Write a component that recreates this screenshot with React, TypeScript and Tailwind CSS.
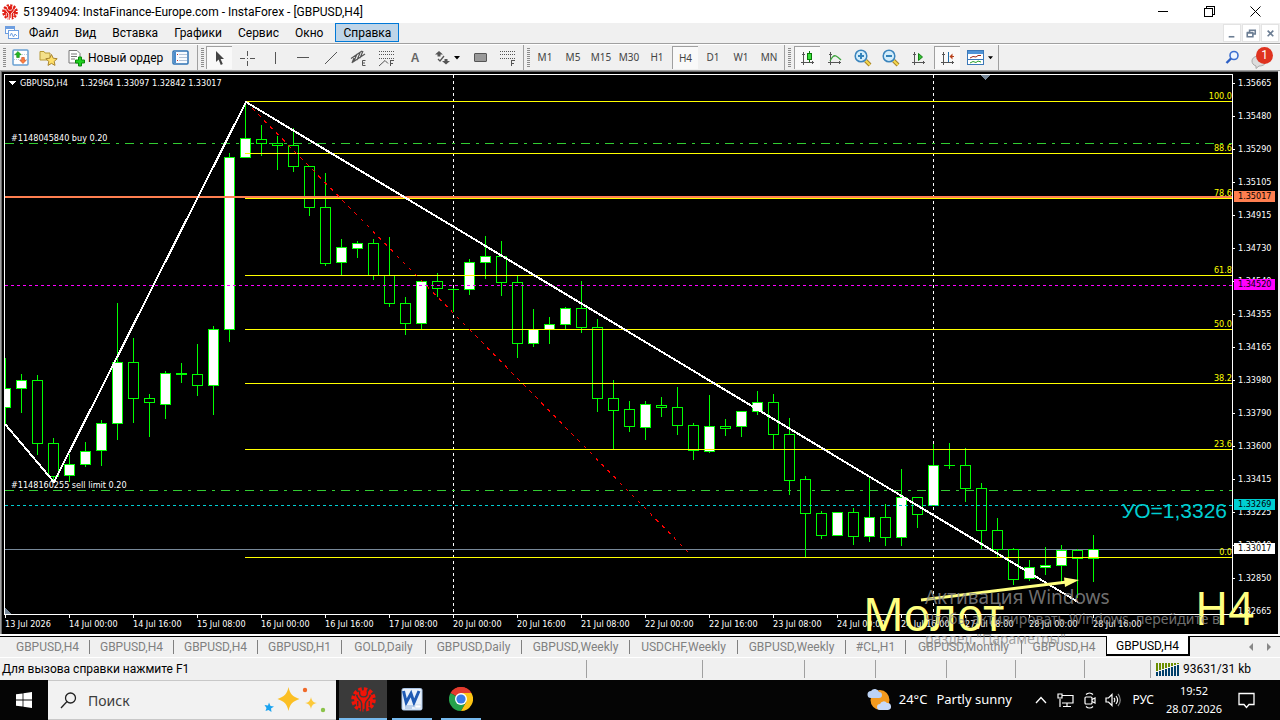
import type { ReactNode } from "react";
import clsx from "clsx";

const menu = ["Файл", "Вид", "Вставка", "Графики", "Сервис", "Окно", "Справка"];

const timeframes = ["M1", "M5", "M15", "M30", "H1", "H4", "D1", "W1", "MN"];

const prices = [
  "1.35665", "1.35480", "1.35290", "1.35105", "1.34915", "1.34730", "1.34540", "1.34355", "1.34165",
  "1.33980", "1.33790", "1.33600", "1.33415", "1.33225", "1.33040", "1.32850", "1.32665",
];

const times = [
  "13 Jul 2026", "14 Jul 00:00", "14 Jul 16:00", "15 Jul 08:00", "16 Jul 00:00", "16 Jul 16:00",
  "17 Jul 08:00", "20 Jul 00:00", "20 Jul 16:00", "21 Jul 08:00", "22 Jul 00:00", "22 Jul 16:00",
  "23 Jul 08:00", "24 Jul 00:00", "24 Jul 16:00", "27 Jul 08:00", "28 Jul 00:00", "28 Jul 16:00",
];

const badges = [
  { price: "1.35017", className: "top-[117px] bg-[#ff7f50]" },
  { price: "1.34520", className: "top-[205px] bg-[#ff00ff]" },
  { price: "1.33269", className: "top-[425px] bg-[#00ced1]" },
  { price: "1.33017", className: "top-[469px] bg-white" },
];

const fibo = [
  { y: 101, label: "100.0" },
  { y: 153, label: "88.6" },
  { y: 198, label: "78.6" },
  { y: 275, label: "61.8" },
  { y: 329, label: "50.0" },
  { y: 383, label: "38.2" },
  { y: 449, label: "23.6" },
  { y: 557, label: "0.0" },
];

// high, body top, body bottom, low, bullish
const candles: [number, number, number, number, number][] = [
  [358, 388, 407, 423, 1], [374, 380, 388, 412, 1], [375, 380, 443, 454, 0], [438, 443, 476, 482, 0],
  [454, 464, 475, 481, 1], [442, 451, 464, 466, 1], [420, 423, 450, 465, 1], [303, 362, 423, 439, 1],
  [338, 362, 398, 422, 0], [394, 398, 402, 436, 0], [371, 373, 404, 418, 1], [363, 373, 374, 382, 0],
  [344, 374, 385, 395, 0], [326, 329, 385, 414, 1], [153, 157, 329, 341, 1], [102, 138, 157, 157, 1],
  [125, 139, 143, 155, 0], [136, 143, 145, 169, 0], [128, 145, 166, 171, 0], [166, 166, 207, 215, 0],
  [173, 207, 263, 265, 0], [239, 247, 262, 274, 1], [241, 243, 248, 257, 1], [239, 243, 275, 279, 0],
  [237, 275, 303, 306, 0], [297, 303, 323, 334, 0], [281, 281, 323, 329, 1], [273, 281, 288, 296, 0],
  [288, 289, 289, 311, 0], [259, 262, 289, 294, 1], [236, 256, 262, 278, 1], [241, 256, 282, 295, 0],
  [275, 282, 343, 357, 0], [309, 329, 343, 346, 1], [317, 324, 329, 343, 1], [307, 308, 324, 328, 1],
  [281, 308, 327, 332, 0], [319, 327, 398, 411, 0], [380, 398, 410, 449, 0], [401, 409, 426, 431, 0],
  [401, 404, 427, 439, 1], [397, 405, 407, 416, 0], [387, 407, 425, 434, 0], [423, 425, 450, 459, 0],
  [395, 426, 451, 452, 1], [419, 426, 428, 435, 0], [411, 411, 426, 436, 1], [391, 402, 411, 414, 1],
  [394, 402, 434, 448, 0], [418, 434, 480, 494, 0], [476, 479, 513, 557, 0], [511, 513, 535, 538, 0],
  [512, 512, 535, 535, 1], [508, 512, 536, 544, 0], [477, 517, 536, 541, 1], [504, 517, 537, 545, 0],
  [469, 497, 537, 545, 1], [497, 497, 514, 527, 0], [444, 465, 505, 505, 1], [443, 465, 465, 468, 0],
  [448, 465, 488, 501, 0], [483, 488, 530, 548, 0], [518, 530, 549, 557, 0], [548, 549, 579, 584, 0],
  [560, 567, 578, 580, 1], [547, 565, 567, 574, 1], [545, 550, 565, 581, 1], [549, 550, 558, 597, 0],
  [535, 549, 558, 581, 1],
];

const tabs = [
  { label: "GBPUSD,H4", width: "w-[84px]" },
  { label: "GBPUSD,H4", width: "w-[84px]" },
  { label: "GBPUSD,H4", width: "w-[84px]" },
  { label: "GBPUSD,H1", width: "w-[84px]" },
  { label: "GOLD,Daily", width: "w-[84px]" },
  { label: "GBPUSD,Daily", width: "w-[96px]" },
  { label: "GBPUSD,Weekly", width: "w-[108px]" },
  { label: "USDCHF,Weekly", width: "w-[108px]" },
  { label: "GBPUSD,Weekly", width: "w-[108px]" },
  { label: "#CL,H1", width: "w-[60px]" },
  { label: "GBPUSD,Monthly", width: "w-[116px]" },
  { label: "GBPUSD,H4", width: "w-[84px]" },
];

const statusCells = ["w-[116px]", "w-[102px]", "w-[71px]", "w-[71px]", "w-[69px]", "w-[69px]", "w-[66px]"];

/* ---------- icons ---------- */

function GearLogo({ size, gap, color }: { size: number; gap: string; color: string }) {
  return (
    <svg width={size} height={size} viewBox="0 0 24 24" fill="none" className="shrink-0">
      <circle cx="12" cy="12" r="10" stroke={color} strokeWidth="3.600" strokeDasharray="3.250 1.986" />
      <circle cx="12" cy="12" r="9" fill={color} />
      <path d="M5.500 7.500C5.500 12 10.200 12 10.200 16V24M18.500 7.500C18.500 12 13.800 12 13.800 16V24" stroke={gap} strokeWidth="1.500" />
      <path d="M8.500 3.500c-1 4 .5 6 3.500 6s4.500-2 3.500-6" stroke={gap} strokeWidth="1.300" />
      <circle cx="12" cy="6.300" r="1.800" fill={color} />
      <path d="M6.500 13.500v5M17.500 13.500v5" stroke={gap} strokeWidth="1.200" />
    </svg>
  );
}

function Axes({ children }: { children: ReactNode }) {
  return (
    <svg width="16" height="16" viewBox="0 0 16 16" fill="none" shapeRendering="crispEdges">
      <path d="M3.500 2v13M1 12.500h13" stroke="#555" />
      <path d="M2 4h3v1H2zM12 11h1v3h-1z" fill="#555" />
      {children}
    </svg>
  );
}

function Magnifier({ plus }: { plus?: boolean }) {
  return (
    <svg width="18" height="18" viewBox="0 0 18 18" fill="none">
      <path d="M11.500 11.500l4.500 4.500" stroke="#a8842a" strokeWidth="4" />
      <path d="M11.500 11.500l4.500 4.500" stroke="#f5d84e" strokeWidth="2" />
      <circle cx="7" cy="7" r="5.800" fill="#d3edfb" stroke="#3b85bd" strokeWidth="1.500" />
      <path d={plus ? "M4 7h6M7 4v6" : "M4 7h6"} stroke="#3483ba" strokeWidth="2" />
    </svg>
  );
}

function Caret() {
  return (
    <svg width="6" height="4" viewBox="0 0 6 4">
      <path d="M0 0h6L3 3.500z" fill="#000" />
    </svg>
  );
}

function DottedLines({ children }: { children?: ReactNode }) {
  return (
    <svg width="16" height="18" viewBox="0 0 16 18" fill="none">
      <path d="M0 2.500h15M0 5.500h15M0 9.500h15" stroke="#555" strokeDasharray="1 1" shapeRendering="crispEdges" />
      {children}
      <path d="M11.500 17v-5.500H15M11.500 14.500H14" stroke="#555" shapeRendering="crispEdges" />
    </svg>
  );
}

/* ---------- toolbar pieces ---------- */

function Grip() {
  return (
    <span className="ml-[3px] flex h-5 w-[3px] flex-col justify-between">
      {[0, 1, 2, 3, 4, 5, 6, 7, 8, 9].map((i) => (
        <i key={i} className="h-px bg-[#8c8c8c]" />
      ))}
    </span>
  );
}

function Tool({ label, pressed, wide, children }: { label: string; pressed?: boolean; wide?: boolean; children: ReactNode }) {
  return (
    <button aria-label={label} className={clsx("flex h-6 shrink-0 items-center justify-center", wide ? "w-[37px]" : "w-7")}>
      <span
        className={clsx(
          "flex h-[23px] w-[26px] items-center justify-center gap-1",
          pressed && "border-t border-l border-[#a0a0a0] bg-[#f9f9f9]"
        )}
      >
        {children}
      </span>
    </button>
  );
}

function Toolbar() {
  return (
    <div className="flex h-[26px] items-center border-t border-white bg-[#f0f0f0]">
      <div className="flex h-full w-[198px] items-center border-r border-[#a0a0a0]">
        <Grip />
        <Tool label="Новый график">
          <svg width="17" height="17" viewBox="0 0 17 17">
            <rect x="1" y="1" width="15" height="15" rx="1" fill="#fff" stroke="#68a0d2" strokeWidth="1.500" />
            <path d="M2 5.500h13M2 10.500h13" stroke="#bcd" strokeDasharray="1 1" />
            <path d="M6 2.500l3.200 3.200H7.300V8.500H4.700V5.700H2.800z" fill="#22b822" stroke="#118811" strokeWidth=".6" />
            <path d="M11 14.500l-3.200-3.200h1.900V8.500h2.600v2.800h1.900z" fill="#ff8040" stroke="#c84414" strokeWidth=".6" />
          </svg>
        </Tool>
        <Tool label="Профили">
          <svg width="19" height="18" viewBox="0 0 19 18">
            <path d="M1 2.500h4l1 1.500h5v7H1z" fill="#f4e08a" stroke="#b79a38" />
            <path d="M12.500 5.500l1.700 3.700 4 .5-3 2.700.8 4-3.500-2-3.500 2 .8-4-3-2.700 4-.5z" fill="#ffe06a" stroke="#a88430" />
          </svg>
        </Tool>
        <button className="flex items-center gap-[3px] pl-[5px] text-[12px] whitespace-nowrap">
          <svg width="18" height="18" viewBox="0 0 18 18">
            <path d="M2 1.500h8l3 3V14H2z" fill="#fff" stroke="#777" />
            <path d="M4 5h6M4 7.500h6M4 10h4" stroke="#777" />
            <path d="M9 9.500h3v-3h3v3h3v3h-3v3h-3v-3H9z" transform="translate(-.5 1.500)" fill="#20d020" stroke="#0a8a0a" />
          </svg>
          Новый ордер
        </button>
        <span className="flex flex-1 justify-center">
          <svg width="17" height="16" viewBox="0 0 17 16">
            <rect x="1" y="1" width="15" height="13" rx="1" fill="#f8fbff" stroke="#2f73b4" strokeWidth="1.500" />
            <path d="M2 2h2v11H2z" fill="#4a8ccc" />
            <path d="M7 4.500h8M7 7.500h8M7 10.500h8" stroke="#b4c4d8" />
            <path d="M5 4h1v1H5zM5 10h1v1H5z" fill="#d03020" />
          </svg>
        </span>
      </div>

      <div className="flex h-full w-[326px] items-center border-r border-[#a0a0a0]">
        <Grip />
        <span className="w-px" />
        <Tool label="Курсор" pressed>
          <svg width="10" height="16" viewBox="0 0 10 16">
            <path d="M1 1v11l2.600-2.400L5.800 15l2-1L5.600 9H9z" fill="#444" />
          </svg>
        </Tool>
        <Tool label="Перекрестие">
          <svg width="16" height="16" viewBox="0 0 16 16" shapeRendering="crispEdges">
            <path d="M8.500 1v5M8.500 11v5M1 8.500h5M11 8.500h5" stroke="#555" />
            <path d="M8 8h1v1H8z" fill="#555" />
          </svg>
        </Tool>
        <Tool label="Вертикальная линия">
          <span className="h-3 w-px bg-[#555]" />
        </Tool>
        <Tool label="Горизонтальная линия">
          <span className="h-px w-3 bg-[#555]" />
        </Tool>
        <Tool label="Трендовая линия">
          <svg width="14" height="14" viewBox="0 0 14 14">
            <path d="M1 13L13 1" stroke="#555" />
          </svg>
        </Tool>
        <Tool label="Канал">
          <svg width="18" height="18" viewBox="0 0 18 18" fill="none">
            <path d="M1 9.500L12 2M3 13L15 5M4 12l3-7M7 11l3-7M10 9l3-7M2 14l2-5" stroke="#555" strokeWidth="1.200" />
            <path d="M15.500 11.500H12.500v5h3M12.500 14h2.500" stroke="#555" />
          </svg>
        </Tool>
        <Tool label="Фибоначчи">
          <DottedLines>
            <path d="M0 17l6-5.500 3 3" stroke="#555" />
          </DottedLines>
        </Tool>
        <Tool label="Текст">
          <span className="font-['Liberation_Sans'] text-[12px] font-bold text-[#666]">A</span>
        </Tool>
        <Tool label="Стрелки" wide>
          <svg width="15" height="14" viewBox="0 0 15 14" fill="none">
            <path d="M4 0l4 3.500H5.500v2h-3v-2H0zM11 13.500L7 10h2.500V8h3v2H15z" fill="#555" />
            <path d="M3 8l2 2 4-5" stroke="#555" strokeWidth="1.300" />
          </svg>
          <Caret />
        </Tool>
        <Tool label="Прямоугольник">
          <span className="h-[9px] w-[13px] rounded-[1px] border border-[#555] bg-[#999]" />
        </Tool>
        <Tool label="Уровни">
          <DottedLines />
        </Tool>
      </div>

      <div className="flex h-full w-[261px] items-center border-r border-[#a0a0a0]">
        <Grip />
        <span className="w-px" />
        {timeframes.map((tf) => (
          <Tool key={tf} label={tf} pressed={tf === "H4"}>
            <span className="font-['Noto_Sans'] text-[10px] text-[#444]">{tf}</span>
          </Tool>
        ))}
      </div>

      <div className="flex h-full w-[214px] items-center border-r border-[#a0a0a0]">
        <Grip />
        <span className="w-[2px]" />
        <Tool label="Свечи" pressed>
          <Axes>
            <path d="M9.500 1v11" stroke="#0a7a0a" />
            <path d="M7.500 3.500h4v6h-4z" fill="#3be03b" stroke="#0a7a0a" />
          </Axes>
        </Tool>
        <Tool label="Линия">
          <Axes>
            <path d="M3 11c2-4 4-6 6-5s3 2 5 4" stroke="#3ea53e" strokeWidth="1.300" shapeRendering="auto" />
          </Axes>
        </Tool>
        <Tool label="Увеличить">
          <Magnifier plus />
        </Tool>
        <Tool label="Уменьшить">
          <Magnifier />
        </Tool>
        <Tool label="Автопрокрутка">
          <Axes>
            <path d="M7.500 3.500v7l4-3.500z" fill="#35c035" stroke="#128212" shapeRendering="auto" />
          </Axes>
        </Tool>
        <Tool label="Сдвиг графика" pressed>
          <Axes>
            <path d="M8.500 2v10" stroke="#1f6ca8" />
            <path d="M10 6.500h4" stroke="#b8401a" />
            <path d="M9.500 6.500l3-3v6z" fill="#b8401a" shapeRendering="auto" />
          </Axes>
        </Tool>
        <Tool label="Шаблоны" wide>
          <svg width="17" height="15" viewBox="0 0 17 15" className="shrink-0" fill="none">
            <rect x=".5" y=".5" width="16" height="14" fill="#fff" stroke="#3b78b8" />
            <path d="M1 1h15v3H1z" fill="#4f93d6" />
            <path d="M1 9.500h15" stroke="#3b78b8" />
            <path d="M3 8l3-1.500 3 .5 2-1.500h3" stroke="#a02818" />
            <path d="M3 13l3-1.500 3 1 2-1.500 3 1" stroke="#28a028" />
          </svg>
          <Caret />
        </Tool>
      </div>

      <div className="flex flex-1 items-center justify-end gap-[11px] pr-[7px]">
        <button aria-label="Поиск">
          <svg width="15" height="15" viewBox="0 0 15 15" fill="none">
            <circle cx="9" cy="5.500" r="4" fill="#eef5ff" stroke="#3c6fd0" strokeWidth="1.600" />
            <path d="M6 8.500L1.500 13" stroke="#2c5fc4" strokeWidth="2.400" />
          </svg>
        </button>
        <button className="relative h-6 w-[22px]" aria-label="Уведомления">
          <svg width="16" height="14" viewBox="0 0 16 14" className="mt-2">
            <path d="M8 1c4 0 7 2 7 5s-3 5-7 5l-3 2.500V11C2 10 1 8 1 6c0-3 3-5 7-5z" fill="#dcdcdc" stroke="#a8a8a8" />
          </svg>
          <span className="absolute top-px right-0 flex size-[17px] items-center justify-center rounded-full bg-[#df3320] text-[12px] leading-4 text-white">
            1
          </span>
        </button>
      </div>
    </div>
  );
}

/* ---------- chart ---------- */

function Plot() {
  return (
    <div className="border border-white">
      <svg className="block h-[539px] w-full text-[9px]" fill="none">
        <g transform="translate(-5 -75)" shapeRendering="crispEdges">
          <path d="M453.500 75V614M933.500 75V614" stroke="#fff" strokeDasharray="3 3" />
          <path d="M5 143.500H3000M5 490.500H3000" stroke="#32cd32" strokeDasharray="9 6 3 6" />
          <path d="M5 549.500H3000" stroke="#778899" />
          {candles.map(([high, top, bottom, low, up], i) => {
            const x = 5 + i * 16;
            return (
              <g key={i} stroke="#00ff00">
                <path d={`M${x + 0.5} ${high}V${top}M${x + 0.5} ${bottom}V${low + 1}`} />
                {top === bottom ? (
                  <path d={`M${x - 5} ${top + 0.5}h11`} />
                ) : (
                  <rect x={x - 4.5} y={top + 0.5} width="10" height={bottom - top} fill={up ? "#fff" : "#000"} />
                )}
              </g>
            );
          })}
          {fibo.map(({ y }) => (
            <path key={y} d={`M245 ${y + 0.5}H3000`} stroke="#ffff00" />
          ))}
          <path d="M5 285.500H3000" stroke="#ff00ff" strokeDasharray="3 3" />
          <path d="M5 505.500H3000" stroke="#00ced1" strokeDasharray="3 3" />
          <path d="M5 197H3000" stroke="#ff7f50" strokeWidth="2" />
          <path d="M246 102L691 555" stroke="#ff0000" strokeDasharray="3.600 5" />
          <path d="M5 424L54 482L246 102L1078 602" stroke="#fff" strokeWidth="2" />
          <path d="M980 75h11l-5.500 5z" fill="#778899" />
          <path d="M5 608v6h6z" fill="#778899" />
          <path d="M8 81h8l-4 4z" fill="#fff" />
        </g>
        <g fill="#fff">
          <text x="15" y="11">GBPUSD,H4</text>
          <text x="75" y="11">1.32964 1.33097 1.32842 1.33017</text>
          <text x="6" y="66">#1148045840 buy 0.20</text>
          <text x="6" y="413">#1148160255 sell limit 0.20</text>
        </g>
        {fibo.map(({ y, label }) => (
          <text key={y} x="100%" y={y - 77} textAnchor="end" fill="#ffff00">
            {label}
          </text>
        ))}
      </svg>
    </div>
  );
}

function PriceAxis() {
  return (
    <div className="relative w-[45px] shrink-0 pt-1 text-[9px] leading-[10px]">
      <div>
        {prices.map((p) => (
          <div key={p} className="flex h-[33px] items-start gap-[3px] last:h-4">
            <i className="mt-[5px] h-px w-[2px] bg-white" />
            {p}
          </div>
        ))}
      </div>
      {badges.map(({ price, className }) => (
        <span key={price} className={clsx("absolute left-px h-[11px] w-[41px] pl-1 text-black", className)}>
          {price}
        </span>
      ))}
    </div>
  );
}

function Chart() {
  return (
    <main className="relative flex flex-1 border-t border-l border-[#a0a0a0] bg-[#f0f0f0] pr-[2px]">
      <div className="flex min-w-0 flex-1 border-t border-l border-[#696969] bg-black pt-[2px] pl-[2px] font-['DejaVu_Sans_Condensed','Noto_Sans',sans-serif] text-white">
        <div className="min-w-0 flex-1">
          <Plot />
          <div className="flex h-[19px] overflow-hidden pl-px text-[9px] leading-3">
            {times.map((t) => (
              <div key={t} className="w-16 shrink-0 whitespace-nowrap">
                <i className="block h-[3px] w-px bg-white" />
                {t}
              </div>
            ))}
          </div>
        </div>
        <PriceAxis />
      </div>

      {/* objects drawn by hand over the chart */}
      <div className="pointer-events-none absolute inset-0 font-['Noto_Sans',sans-serif] whitespace-nowrap text-[#ffff80]">
        <svg className="absolute top-[500px] left-[918px]" width="164" height="34" viewBox="0 0 164 34">
          <path d="M2 29L148 11" stroke="#ffff80" strokeWidth="3" />
          <path d="M145 6.500L160 9l-14 7z" fill="#ffff80" />
        </svg>
        <span className="absolute top-[517px] left-[862px] text-[45px] leading-[52px]">Молот</span>
        <span className="absolute top-[511px] right-[26px] text-[45px] leading-[52px]">H4</span>
        <span className="absolute top-[428px] right-[53px] font-['Liberation_Sans',sans-serif] text-[21px] leading-6 text-[#00ced1]">
          УО=1,3326
        </span>
      </div>

      {/* system activation notice */}
      <div className="pointer-events-none absolute top-[514px] left-[924px] z-10 font-['Noto_Sans',sans-serif] whitespace-nowrap text-[#8c8c8c]/80">
        <p className="text-[19px] leading-6">Активация Windows</p>
        <p className="text-[14px] leading-5">Чтобы активировать Windows, перейдите в</p>
        <p className="text-[14px] leading-5">раздел "Параметры".</p>
      </div>
    </main>
  );
}

/* ---------- taskbar ---------- */

function Taskbar() {
  return (
    <footer className="flex h-10 bg-[#050505] font-['Noto_Sans',sans-serif] text-[13px] text-white">
      <button className="flex w-12 items-center justify-center" aria-label="Пуск">
        <svg width="16" height="16" viewBox="0 0 16 16" fill="#fff">
          <path d="M0 2.300L6.600 1.400v6.200H0zM7.400 1.300L16 0v7.600H7.400zM0 8.400h6.600v6.200L0 13.700zM7.400 8.400H16V16l-8.600-1.300z" />
        </svg>
      </button>
      <label className="flex w-72 items-center border-y border-[#c8c8c8] bg-[#f2f2f2] pr-[10px] pl-3">
        <svg width="17" height="17" viewBox="0 0 17 17" fill="none" stroke="#222" strokeWidth="1.300">
          <circle cx="10.500" cy="6" r="5" />
          <path d="M7 9.500L1 16" />
        </svg>
        <input type="text" aria-label="Поиск" placeholder="Поиск" className="ml-[11px] w-0 flex-1 text-[14px] outline-none placeholder:text-[#3c3c3c]" />
        <svg width="62" height="28" viewBox="0 0 62 28">
          <path d="M24.500 1c1.500 7 4 9.500 11 12-7 2.500-9.500 5-11 12-1.500-7-4-9.500-11-12 7-2.500 9.500-5 11-12z" fill="#fbbf24" />
          <path d="M47 11c.8 4 2.200 5.500 6 6-3.800.8-5.200 2.200-6 6-.8-3.800-2.200-5.200-6-6 3.800-.5 5.200-2 6-6z" fill="#fcc93a" />
          <path d="M5 16.500l1.500 3.500 3.500.5-3 2 .5 3.500-3-2-3 1 1-3-2-3 3.500.5z" fill="#1aa3f0" />
          <circle cx="41" cy="4" r="2.200" fill="#f06a2a" />
          <circle cx="59" cy="24" r="2.200" fill="#8bc34a" />
        </svg>
      </label>
      <button className="ml-[3px] flex w-12 items-center justify-center border-b-2 border-[#76b9ed] bg-[#3a3a3a]" aria-label="InstaForex">
        <GearLogo size={25} gap="#3a3a3a" color="#f01408" />
      </button>
      <button className="ml-[5px] flex w-10 items-center justify-center border-b-2 border-[#76b9ed]" aria-label="Word">
        <svg width="22" height="23" viewBox="0 0 22 23">
          <rect x="1" y=".5" width="20" height="21.500" rx="1.500" fill="#e9f1fb" stroke="#a9c4e6" />
          <path d="M2.500 3l2.700 11.500L10 5.500 13 14.500 18 3" fill="none" stroke="#1f5ab4" strokeWidth="3" />
          <path d="M4 18h10M4 20h7" stroke="#8fb0dc" />
          <path d="M14 17h6v3h-6z" fill="#fff" stroke="#b9cce6" strokeWidth=".6" />
        </svg>
      </button>
      <button className="ml-[9px] flex w-10 items-center justify-center border-b-2 border-[#76b9ed]" aria-label="Chrome">
        <svg width="24" height="24" viewBox="0 0 24 24">
          <path d="M12 12L1.600 6A12 12 0 0 1 22.400 6z" fill="#e33b2e" />
          <path d="M12 12L1.600 6A12 12 0 0 0 12 24l5.200-9z" fill="#26a14b" />
          <path d="M12 6h10.400A12 12 0 0 1 12 24l5.200-9z" fill="#fdc414" />
          <path d="M1.600 6A12 12 0 0 1 22.400 6H12L8 8z" fill="#e33b2e" />
          <circle cx="12" cy="12" r="6" fill="#fff" />
          <circle cx="12" cy="12" r="4.600" fill="#3a7be8" />
        </svg>
      </button>

      <div className="flex flex-1 items-center justify-end">
        <svg width="25" height="24" viewBox="0 0 25 24">
          <ellipse cx="13" cy="12" rx="9.500" ry="10" fill="#f39a1e" />
          <path d="M4 10a3.500 3.500 0 0 1 0-7 4.500 4.500 0 0 1 8 1 3 3 0 0 1 0 6z" fill="#bcd3f5" />
          <path d="M13 22a3 3 0 0 1 0-6 4 4 0 0 1 7-1 3.500 3.500 0 0 1 1 7z" fill="#c8daf8" />
        </svg>
        <span className="ml-[7px]">24°C</span>
        <span className="ml-[9px] w-[99px] whitespace-nowrap">Partly sunny</span>
        <svg width="12" height="8" viewBox="0 0 12 8" fill="none" stroke="#fff" strokeWidth="1.300">
          <path d="M1 7l5-5.500L11 7" />
        </svg>
        <svg className="ml-[10px]" width="17" height="15" viewBox="0 0 17 15" fill="none" stroke="#fff" strokeWidth="1.200">
          <path d="M5 2.500h11v7.500H5M10 10v3.500M6 13.500h8M3 6v8M1 1h4v4H1z" />
        </svg>
        <svg className="ml-[9px]" width="14" height="17" viewBox="0 0 14 17" fill="none" stroke="#fff" strokeWidth="1.200">
          <rect x="2" y="5" width="7" height="7" rx="1" />
          <path d="M9 7.500l3-1.500v5l-3-1.500M3 2.500c2-2 5-2 7 0M3 14.500c2 2 5 2 7 0" />
        </svg>
        <svg className="ml-2" width="17" height="14" viewBox="0 0 17 14" fill="none" stroke="#fff" strokeWidth="1.200">
          <path d="M1 5h2.500L7 1.500v11L3.500 9H1zM9 5c1 1 1 3 0 4M11 3c2 2.500 2 5.500 0 8" />
          <path d="M13 1c3 3.500 3 8.500 0 12" stroke="#888" />
        </svg>
        <span className="ml-[10px] text-[12px]">РУС</span>
        <span className="ml-2 w-[64px] text-center text-[11px] leading-[18px]">
          19:52
          <br />
          28.07.2026
        </span>
        <svg className="mr-[25px] ml-3" width="17" height="17" viewBox="0 0 17 17" fill="none" stroke="#fff" strokeWidth="1.300">
          <path d="M1 1.500h15v11h-5L8.500 15.500 6 12.500H1z" />
        </svg>
      </div>
    </footer>
  );
}

export default function App() {
  return (
    <div className="flex min-h-screen flex-col overflow-hidden bg-[#f0f0f0] font-['Roboto',sans-serif] text-[12px] text-black">
      {/* Title bar */}
      <header className="flex h-[23px] items-center bg-white pr-[2px] pl-[2px] leading-4">
        <GearLogo size={16} gap="#ffffff" color="#e01b10" />
        <h1 className="ml-[5px] flex-1 whitespace-nowrap">51394094: InstaFinance-Europe.com - InstaForex - [GBPUSD,H4]</h1>
        <button className="flex w-[46px] justify-center" aria-label="Свернуть">
          <span className="h-px w-[10px] bg-black" />
        </button>
        <button className="flex w-[46px] justify-center" aria-label="Развернуть">
          <svg width="11" height="11" viewBox="0 0 11 11" fill="none" stroke="#000" shapeRendering="crispEdges">
            <path d="M.5 2.500h8v8h-8zM2.500 2V.5h8v8H9" />
          </svg>
        </button>
        <button className="flex w-[46px] justify-center" aria-label="Закрыть">
          <svg width="11" height="11" viewBox="0 0 11 11" fill="none" stroke="#000">
            <path d="M.5.5l10 10M10.500.5l-10 10" />
          </svg>
        </button>
      </header>

      {/* Menu */}
      <nav className="flex h-[21px] items-start border-b border-[#a0a0a0] pl-1">
        <svg className="mt-0.5 mr-[2px]" width="15" height="15" viewBox="0 0 15 15" fill="#fff" stroke="#6f9fe0">
          <rect x="1.500" y="1.500" width="9" height="7" />
          <path d="M2 3h8" strokeWidth="2" />
          <rect x="4.500" y="5.500" width="10" height="8" />
          <path d="M6 11l1.500-3 2 4 1.500-3 2 2" fill="none" />
        </svg>
        {menu.map((m) => (
          <button
            key={m}
            className={clsx(
              "h-[19px] border px-[7px] leading-4 whitespace-nowrap",
              m === "Справка" ? "ml-1 border-[#0078d7] bg-[#bfd5e8]" : "border-transparent"
            )}
          >
            {m}
          </button>
        ))}
        <div className="mt-px mr-px flex flex-1 justify-end gap-px">
          {["M5 12.500h6", "M4.500 8.500h6v4h-6zM7 8V5.500h6v4h-2M4 8h7", "M6 6l6 6M12 6l-6 6"].map((d) => (
            <button key={d} aria-label="Окно графика" className="size-[18px] border border-[#e3e3e3] bg-white">
              <svg width="16" height="16" viewBox="0 0 17 17" fill="none" stroke="#6b7d93" strokeWidth="1.700">
                <path d={d} />
              </svg>
            </button>
          ))}
        </div>
      </nav>

      <Toolbar />
      <Chart />

      {/* Chart tabs */}
      <div className="flex h-6 items-start border-b border-white bg-[linear-gradient(#fff_2px,#f0f0f0_2px)] pt-[2px]">
        <div className="flex flex-1 border-t border-black pl-[6px] leading-[18px]">
          {tabs.map(({ label, width }, i) => (
            <button key={i} className={clsx("flex shrink-0 items-center whitespace-nowrap text-[#808080]", width)}>
              <span className="flex-1 text-center">{label}</span>
              {i < tabs.length - 1 && <i className="h-[14px] w-px bg-[#808080]" />}
            </button>
          ))}
          <button className="-mt-px h-[20px] w-[84px] shrink-0 border-r-2 border-b-2 border-l border-black bg-white pt-[2px] text-center leading-4">
            GBPUSD,H4
          </button>
          <div className="flex flex-1 items-center justify-end gap-[14px] pr-[9px]">
            <svg width="4" height="8" viewBox="0 0 4 8" fill="#888">
              <path d="M4 0v8L0 4z" />
            </svg>
            <svg width="4" height="8" viewBox="0 0 4 8" fill="#888">
              <path d="M0 0v8l4-4z" />
            </svg>
          </div>
        </div>
      </div>

      {/* Status bar */}
      <div className="flex h-[22px] items-center">
        <span className="flex-1 truncate pl-[2px]">Для вызова справки нажмите F1</span>
        {statusCells.map((w, i) => (
          <span key={i} className={clsx("h-[18px] border-l border-[#a0a0a0]", w)} />
        ))}
        <span className="flex h-[18px] w-[130px] items-center gap-[3px] border-l border-[#a0a0a0] pl-[5px]">
          <svg width="24" height="13" viewBox="0 0 24 13" shapeRendering="crispEdges">
            {[0, 1, 2, 3, 4, 5, 6, 7].map((i) => (
              <g key={i}>
                <rect x={i * 3} y="0" width="2" height={8 - i} fill="#6b8e00" />
                <rect x={i * 3} y={9 - i} width="2" height={4 + i} fill="#003f6b" />
              </g>
            ))}
          </svg>
          93631/31 kb
        </span>
      </div>

      <Taskbar />
    </div>
  );
}
